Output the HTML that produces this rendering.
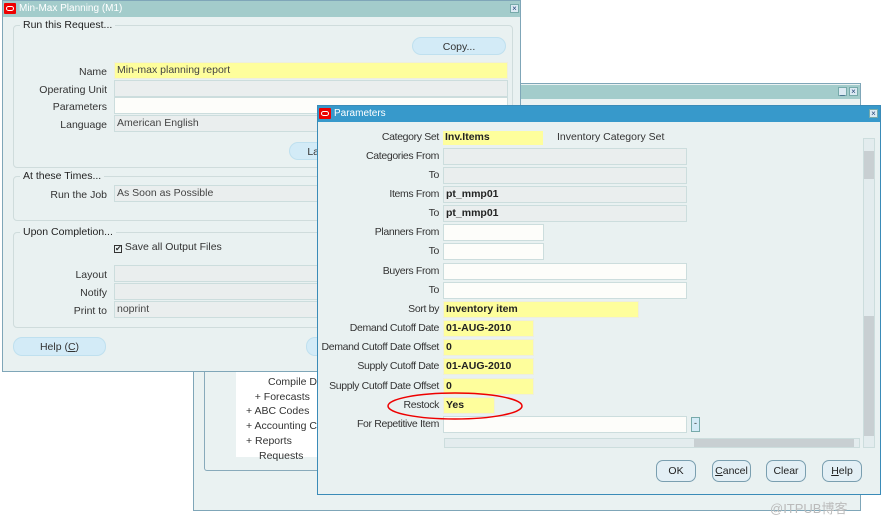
<!DOCTYPE html>
<html><head><style>
*{box-sizing:border-box}
body{margin:0;width:890px;height:520px;background:#fff;font-family:"Liberation Sans",sans-serif;font-size:10.5px;color:#333;position:relative;overflow:hidden}
.a{position:absolute}
.win{position:absolute;background:#e9f1f1;border:1px solid #7fa6b8}
.tb{position:absolute;left:0;right:0;top:0;height:16px;background:#a3cccb;color:#fff;font-size:10px;line-height:16px;padding-left:16px}
.ic{position:absolute;left:1px;top:2px;width:12px;height:11px;background:#e00;border-radius:1px}
.ic:after{content:"";position:absolute;left:2px;top:3px;width:6px;height:3px;border:1px solid #fff;border-radius:3px}
.grp{position:absolute;border:1px solid #cfdcdc;border-radius:4px}
.gl{position:absolute;top:-7px;left:6px;background:#e9f1f1;padding:0 3px;font-size:10.5px;color:#222}
.lb{position:absolute;text-align:right;font-size:10.5px;color:#333;white-space:nowrap}
.pl{letter-spacing:-0.35px}
.f{position:absolute;height:17px;background:#eaeeee;border:1px solid #cdd;font-size:10.5px;line-height:15px;padding-left:2px;color:#444}
.y{background:#fefe9c;border-color:#eed}
.w{background:#fdfdfa}
.b{font-weight:bold;color:#222}
.btn{position:absolute;background:#d3ebf7;border:1px solid #bfe0ef;border-radius:9px;text-align:center;font-size:10.5px;line-height:18px;color:#333}
.btn2{position:absolute;background:#e3eff5;border:1px solid #7a9fb0;border-radius:7px;text-align:center;font-size:10.5px;line-height:20px;color:#222;height:22px}
.x{position:absolute;width:9px;height:9px;background:#dceaf3;border:1px solid #7aa;font-size:8px;line-height:7px;text-align:center;color:#247}
</style></head><body>

<div class="win" style="left:193px;top:83px;width:668px;height:428px;background:#eaf2f2">
 <div class="tb" style="top:1px;height:14px"></div>
 <div class="x" style="left:644px;top:3px">_</div><div class="x" style="left:655px;top:3px">×</div>
 <div class="a" style="left:10px;top:285px;width:300px;height:102px;border:1px solid #8ab;border-top:none;border-radius:0 0 3px 3px"></div>
 <div class="a" style="left:42px;top:285px;width:100px;height:88px;background:#fff;line-height:14.7px;padding-left:10px;padding-top:6px">
  <div style="padding-left:22px">Compile De</div><div>&nbsp;&nbsp;&nbsp;+ Forecasts</div><div>+ ABC Codes</div><div>+ Accounting C</div><div>+ Reports</div><div style="padding-left:13px">Requests</div>
 </div>
</div>

<div class="win" style="left:2px;top:0;width:519px;height:372px">
 <div class="tb">Min-Max Planning (M1)</div><div class="ic"></div>
 <div class="x" style="left:507px;top:3px">×</div>
 <div class="grp" style="left:10px;top:24px;width:500px;height:143px"><div class="gl">Run this Request...</div></div>
 <div class="btn" style="left:409px;top:36px;width:94px;height:18px">Copy...</div>
 <div class="lb" style="left:10px;top:65px;width:94px">Name</div>
 <div class="f y" style="left:111px;top:61px;width:394px">Min-max planning report</div>
 <div class="lb" style="left:10px;top:83px;width:94px">Operating Unit</div>
 <div class="f" style="left:111px;top:79px;width:394px"></div>
 <div class="lb" style="left:10px;top:100px;width:94px">Parameters</div>
 <div class="f w" style="left:111px;top:96px;width:394px"></div>
 <div class="lb" style="left:10px;top:118px;width:94px">Language</div>
 <div class="f" style="left:111px;top:114px;width:394px">American English</div>
 <div class="btn" style="left:286px;top:141px;width:60px;height:18px">Lang</div>
 <div class="grp" style="left:10px;top:175px;width:500px;height:45px"><div class="gl">At these Times...</div></div>
 <div class="lb" style="left:10px;top:188px;width:94px">Run the Job</div>
 <div class="f" style="left:111px;top:184px;width:394px">As Soon as Possible</div>
 <div class="grp" style="left:10px;top:231px;width:500px;height:96px"><div class="gl">Upon Completion...</div></div>
 <div class="a" style="left:111px;top:240px"><span style="display:inline-block;width:8px;height:8px;border:1px solid #333;font-size:8px;line-height:6px;vertical-align:-1px">✔</span> Save all Output Files</div>
 <div class="lb" style="left:10px;top:268px;width:94px">Layout</div>
 <div class="f" style="left:111px;top:264px;width:394px"></div>
 <div class="lb" style="left:10px;top:286px;width:94px">Notify</div>
 <div class="f" style="left:111px;top:282px;width:394px"></div>
 <div class="lb" style="left:10px;top:304px;width:94px">Print to</div>
 <div class="f" style="left:111px;top:300px;width:394px">noprint</div>
 <div class="btn" style="left:10px;top:336px;width:93px;height:19px">Help (<u>C</u>)</div>
 <div class="btn" style="left:303px;top:336px;width:60px;height:19px"></div>
</div>

<div class="win" style="left:317px;top:105px;width:564px;height:390px;border-color:#3a8bb8">
 <div class="tb" style="background:#3799cb;height:16px">Parameters</div><div class="ic"></div>
 <div class="x" style="left:551px;top:3px">×</div>
 <div class="a" style="left:545px;top:32px;width:12px;height:310px;background:#e3ecee;border:1px solid #cdd"></div>
 <div class="a" style="left:546px;top:45px;width:10px;height:28px;background:#c8cfd2"></div>
 <div class="a" style="left:546px;top:210px;width:10px;height:120px;background:#c8cfd2"></div>
 <div class="a" style="left:126px;top:332px;width:416px;height:10px;background:#e3ecee;border:1px solid #cdd"></div>
 <div class="a" style="left:376px;top:333px;width:160px;height:8px;background:#c8cfd2"></div>
</div>
<div id="p"></div>
<script>
var rows=[["Categories From",156,"","",244],["To",175,"","",244],["Items From",194,"pt_mmp01","b",244],["To",213,"pt_mmp01","b",244],["Planners From",232,"","w",101],["To",251,"","w",101],["Buyers From",271,"","w",244],["To",290,"","w",244],["Sort by",309,"Inventory item","y b",196],["Demand Cutoff Date",328,"01-AUG-2010","y b",91],["Demand Cutoff Date Offset",347,"0","y b",91],["Supply Cutoff Date",366,"01-AUG-2010","y b",91],["Supply Cutoff Date Offset",386,"0","y b",91],["Restock",405,"Yes","y b",52],["For Repetitive Item",424,"","w",244]];
var h="";rows.forEach(function(r){h+='<div class="lb pl" style="left:300px;width:139px;top:'+(r[1]-6)+'px">'+r[0]+'</div><div class="f '+r[3]+'" style="left:443px;top:'+(r[1]-8)+'px;width:'+r[4]+'px">'+r[2]+'</div>';});
document.getElementById("p").innerHTML=h;
</script>
<div class="a" style="left:318px;top:122px;width:540px;height:9px;background:#e9f1f1"></div>
<div class="a" style="left:443px;top:131px;width:100px;height:14px;background:#fefe9c"></div>
<div class="a" style="left:445px;top:131px;font-weight:bold;line-height:12px;color:#222">Inv.Items</div>
<div class="lb pl" style="left:300px;width:139px;top:131px;line-height:12px">Category Set</div>
<div class="a" style="left:557px;top:131px;line-height:12px">Inventory Category Set</div>
<div class="a" style="left:691px;top:417px;width:9px;height:15px;background:#d3ebf7;border:1px solid #7aa;font-size:9px;line-height:11px;text-align:center">-</div>
<svg class="a" style="left:385px;top:390px" width="140" height="32"><ellipse cx="70" cy="16" rx="67" ry="13" fill="none" stroke="#e00" stroke-width="1.5"/></svg>
<div class="btn2" style="left:656px;top:460px;width:40px">OK</div>
<div class="btn2" style="left:712px;top:460px;width:39px"><u>C</u>ancel</div>
<div class="btn2" style="left:766px;top:460px;width:40px">Clear</div>
<div class="btn2" style="left:822px;top:460px;width:40px"><u>H</u>elp</div>
<div class="a" style="left:770px;top:498px;font-size:13px;color:#bbb;font-family:'Liberation Sans','Noto Sans CJK SC',sans-serif">@ITPUB博客</div>
</body></html>
